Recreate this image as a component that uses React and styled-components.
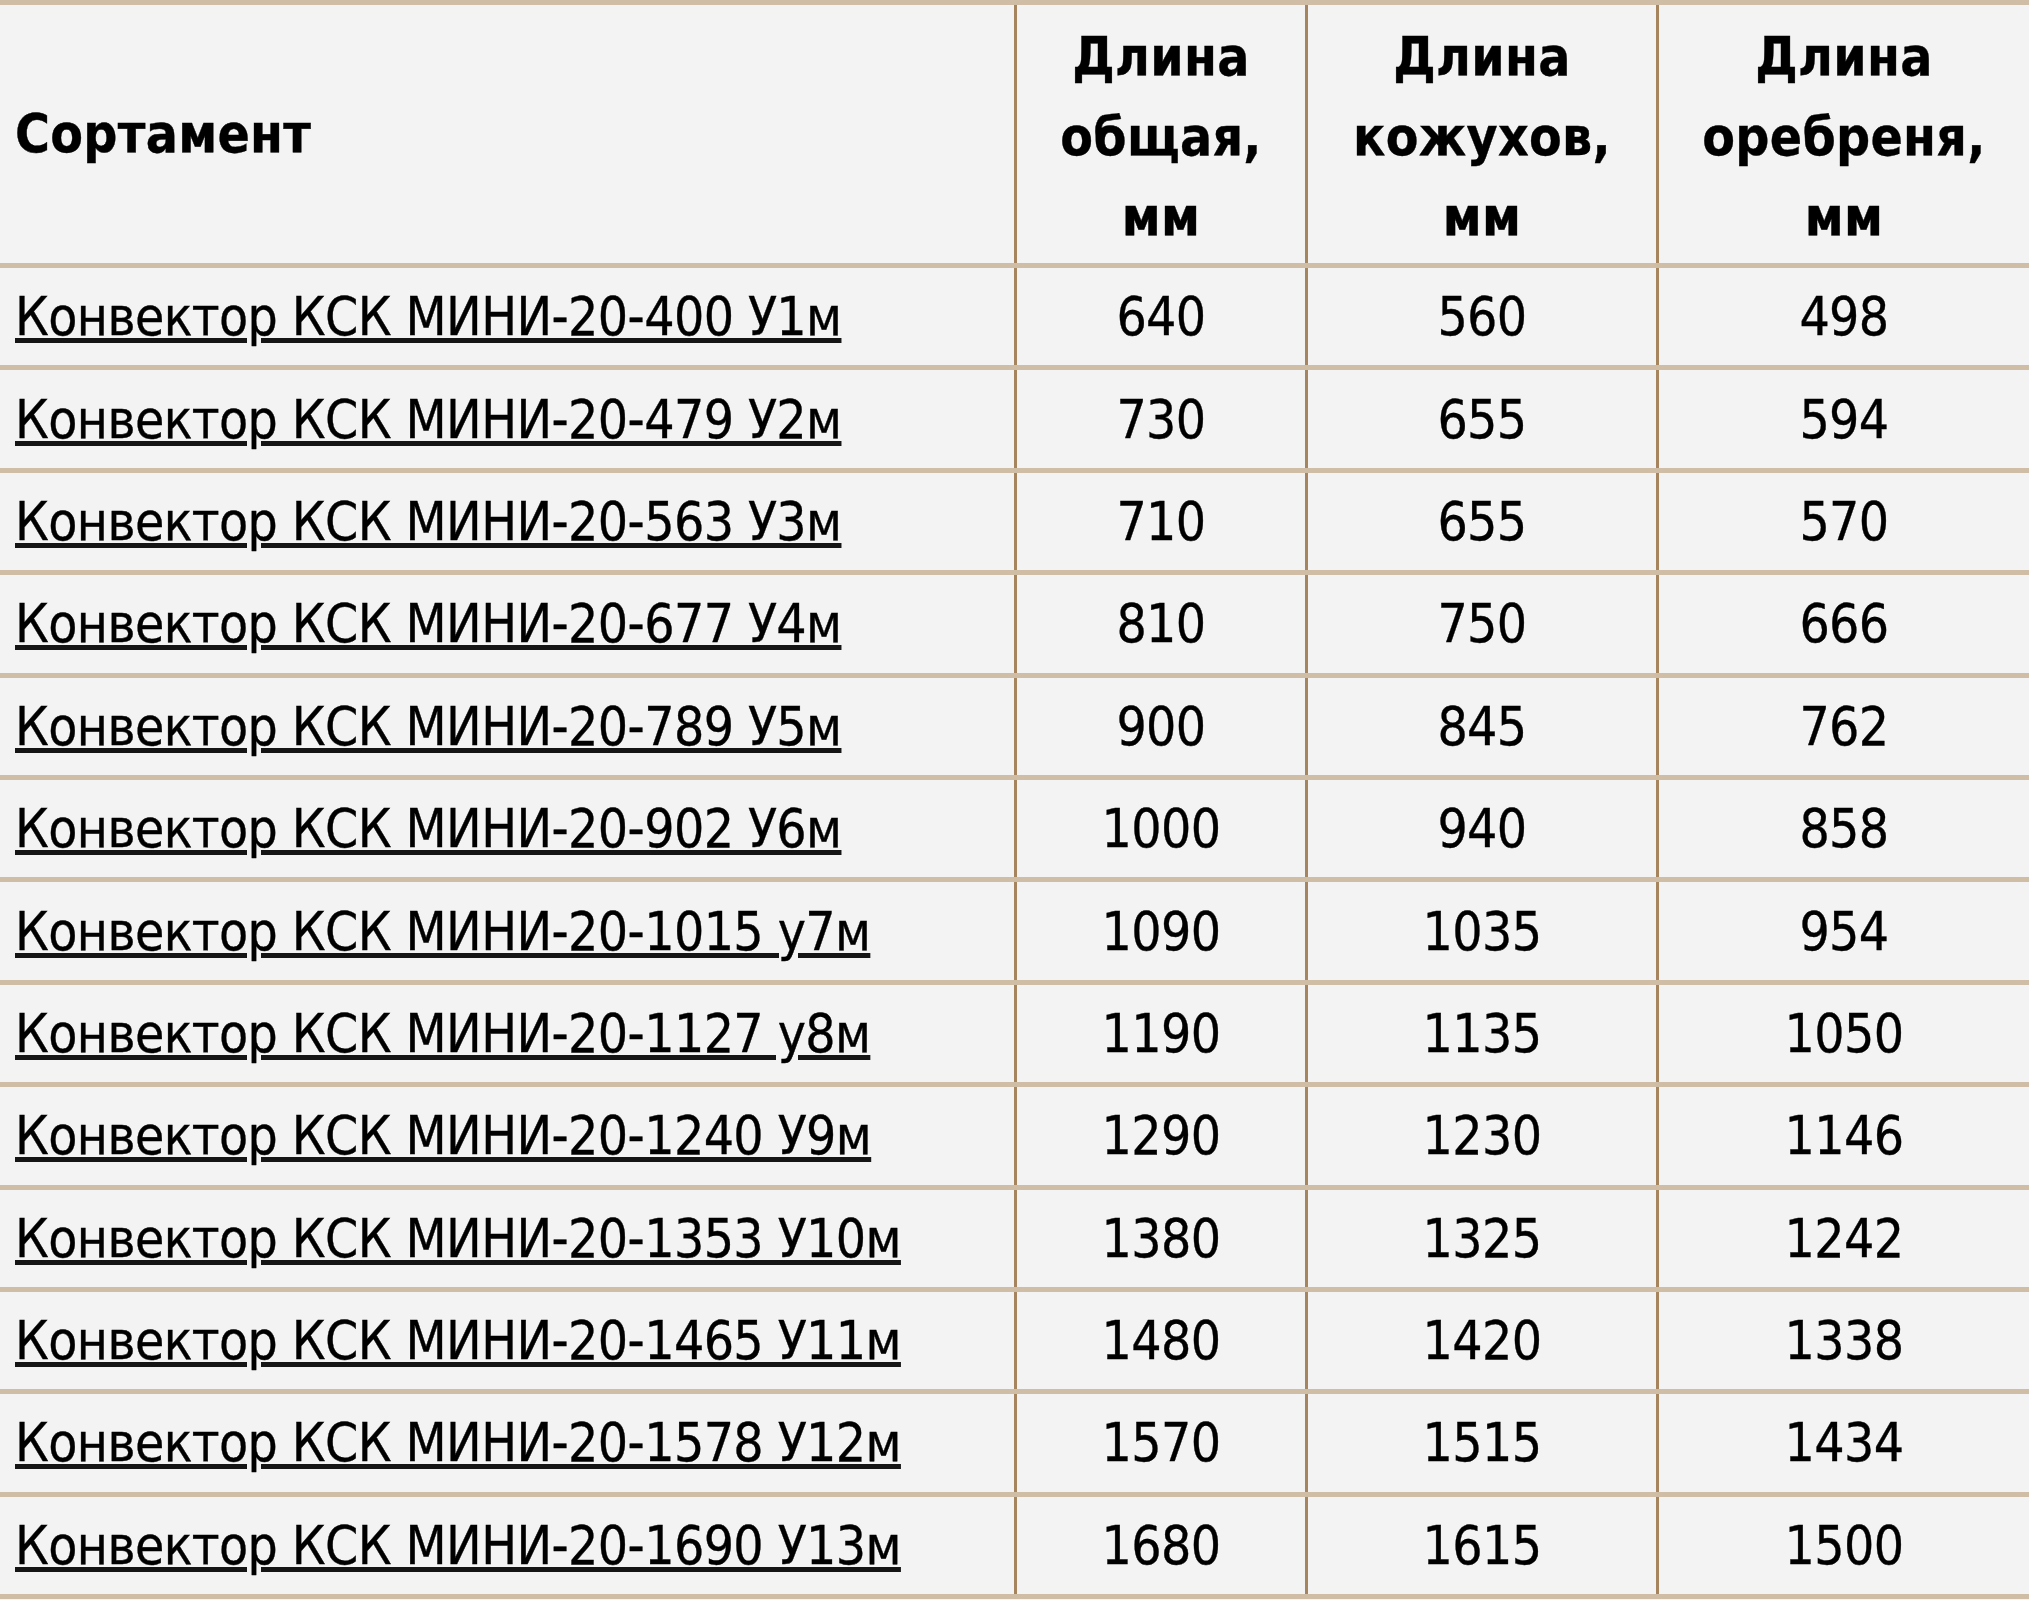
import React from "react";
import styled, { createGlobalStyle } from "styled-components";

const Global = createGlobalStyle`
  html, body {
    margin: 0;
    padding: 0;
    background: #f3f3f3;
  }
  body {
    font-family: "DejaVu Sans Condensed", "DejaVu Sans", sans-serif;
    font-stretch: condensed;
    color: #000;
    overflow: hidden;
  }
`;

const COLS = "1014px 291px 351px 1fr";

const Table = styled.div`
  width: 2029px;
  border-top: 5px solid #cfbda5;
  background: #f3f3f3;
`;

const Row = styled.div`
  display: grid;
  grid-template-columns: ${COLS};
  height: ${(p) => (p.$head ? "258px" : "97.4px")};
  border-bottom: 5px solid #cfbda5;
  box-sizing: content-box;
`;

const Cell = styled.div`
  box-sizing: border-box;
  display: flex;
  align-items: center;
  justify-content: ${(p) => (p.$first ? "flex-start" : "center")};
  padding-left: ${(p) => (p.$first ? "15px" : "0")};
  border-left: ${(p) => (p.$first ? "none" : "3px solid #a6845d")};
  font-size: 53px;
  letter-spacing: -0.6px;
  -webkit-text-stroke: 0.35px #000;
  text-align: center;
  white-space: nowrap;
`;

const HeadText = styled.span`
  font-weight: bold;
  line-height: 80px;
  letter-spacing: 0.3px;
  margin-top: ${(p) => (p.$multi ? "6px" : "0")};
`;

const Link = styled.a`
  color: #000;
  text-decoration: underline;
  text-decoration-thickness: 5px;
  text-underline-offset: 3px;
  text-decoration-color: #151515;
  cursor: pointer;
`;

const rows = [
  ["Конвектор КСК МИНИ-20-400 У1м", 640, 560, 498],
  ["Конвектор КСК МИНИ-20-479 У2м", 730, 655, 594],
  ["Конвектор КСК МИНИ-20-563 У3м", 710, 655, 570],
  ["Конвектор КСК МИНИ-20-677 У4м", 810, 750, 666],
  ["Конвектор КСК МИНИ-20-789 У5м", 900, 845, 762],
  ["Конвектор КСК МИНИ-20-902 У6м", 1000, 940, 858],
  ["Конвектор КСК МИНИ-20-1015 у7м", 1090, 1035, 954],
  ["Конвектор КСК МИНИ-20-1127 у8м", 1190, 1135, 1050],
  ["Конвектор КСК МИНИ-20-1240 У9м", 1290, 1230, 1146],
  ["Конвектор КСК МИНИ-20-1353 У10м", 1380, 1325, 1242],
  ["Конвектор КСК МИНИ-20-1465 У11м", 1480, 1420, 1338],
  ["Конвектор КСК МИНИ-20-1578 У12м", 1570, 1515, 1434],
  ["Конвектор КСК МИНИ-20-1690 У13м", 1680, 1615, 1500],
];

export default function App() {
  return (
    <>
      <Global />
      <Table role="table">
        <Row $head role="row">
          <Cell $first role="columnheader">
            <HeadText>Сортамент</HeadText>
          </Cell>
          <Cell role="columnheader">
            <HeadText $multi>
              Длина
              <br />
              общая,
              <br />
              мм
            </HeadText>
          </Cell>
          <Cell role="columnheader">
            <HeadText $multi>
              Длина
              <br />
              кожухов,
              <br />
              мм
            </HeadText>
          </Cell>
          <Cell role="columnheader">
            <HeadText $multi>
              Длина
              <br />
              оребреня,
              <br />
              мм
            </HeadText>
          </Cell>
        </Row>
        {rows.map(([name, a, b, c]) => (
          <Row key={name} role="row">
            <Cell $first role="cell">
              <Link>{name}</Link>
            </Cell>
            <Cell role="cell">{a}</Cell>
            <Cell role="cell">{b}</Cell>
            <Cell role="cell">{c}</Cell>
          </Row>
        ))}
      </Table>
    </>
  );
}
